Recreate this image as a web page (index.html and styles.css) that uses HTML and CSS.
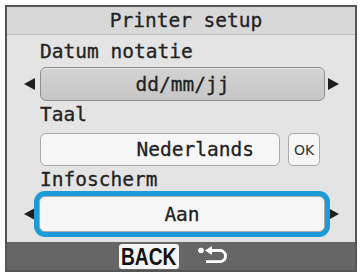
FILE: index.html
```html
<!DOCTYPE html>
<html>
<head>
<meta charset="utf-8">
<link rel="stylesheet" href="styles.css">
</head>
<body>
<div class="screen">
  <div class="title">Printer setup</div>
  <div class="content">
    <div class="label first">Datum notatie</div>
    <div class="row">
      <div class="arrow-cell left"><span class="tri tri-left"></span></div>
      <div class="box gray">dd/mm/jj</div>
      <div class="arrow-cell right"><span class="tri tri-right"></span></div>
    </div>
    <div class="label">Taal</div>
    <div class="row row-lang">
      <div class="box white lang">Nederlands</div>
      <div class="ok">OK</div>
    </div>
    <div class="label">Infoscherm</div>
    <div class="row row-info">
      <div class="arrow-cell left"><span class="tri tri-left"></span></div>
      <div class="box white focus">Aan</div>
      <div class="arrow-cell right"><span class="tri tri-right"></span></div>
    </div>
  </div>
  <div class="bottom">
    <div class="back"><span>BACK</span></div>
    <svg class="ret" width="30" height="20" viewBox="0 0 30 20">
      <circle cx="3" cy="4.5" r="2.8" fill="#fff"/>
      <polygon points="7,4.5 14,0 14,9" fill="#fff"/>
      <path d="M13 4.5 H22 A5.6 5.6 0 0 1 22 15.7 H8" fill="none" stroke="#fff" stroke-width="2.8"/>
    </svg>
  </div>
</div>
</body>
</html>
```
FILE: styles.css
```css
html, body {
  margin: 0;
  padding: 0;
  background: #ffffff;
}
.screen {
  box-sizing: border-box;
  width: 352px;
  height: 267px;
  margin: 5px 0 0 5px;
  border: 2px solid #555;
  background: #e4e4e4;
  display: flex;
  flex-direction: column;
  font-family: "DejaVu Sans Mono", monospace;
  font-size: 19.5px;
  color: #222;
  -webkit-text-stroke: 0.3px #222;
}
.title {
  height: 27px;
  line-height: 27px;
  background: #d8d8d8;
  border-bottom: 1px solid #b9b9b9;
  text-align: center;
  padding-left: 10px;
}
.content {
  display: flex;
  flex-direction: column;
  padding-top: 6px;
}
.label {
  line-height: 22px;
  height: 22px;
  padding-left: 33px;
  margin-top: 3px;
}
.label.first { margin-top: 0; }
.row {
  display: flex;
  align-items: center;
  margin-top: 4px;
}
.row-lang {
  margin-top: 7px;
  padding-left: 33px;
  gap: 8px;
}
.row-info { margin-top: 5px; }
.arrow-cell {
  width: 33px;
  display: flex;
  align-items: center;
}
.arrow-cell.left { justify-content: flex-end; padding-right: 5px; box-sizing: border-box; }
.arrow-cell.right { width: 30px; padding-left: 3px; box-sizing: border-box; }
.tri {
  display: block;
  width: 0;
  height: 0;
  border-top: 6px solid transparent;
  border-bottom: 6px solid transparent;
}
.tri-left { border-right: 11px solid #1e1e1e; }
.tri-right { border-left: 11px solid #1e1e1e; }
.box {
  box-sizing: border-box;
  width: 285px;
  height: 34px;
  border-radius: 6px;
  display: flex;
  align-items: center;
  justify-content: center;
}
.gray {
  background: linear-gradient(#d3d3d3, #c6c6c6);
  border: 1px solid #8e8e8e;
  box-shadow: inset 0 1px 0 #e6e6e6;
}
.white {
  background: #f6f6f6;
  border: 1px solid #a9a9a9;
}
.lang {
  width: 240px;
  height: 33px;
  justify-content: flex-end;
  padding-right: 25px;
}
.ok {
  box-sizing: border-box;
  width: 32px;
  height: 33px;
  background: #f6f6f6;
  border: 1px solid #a9a9a9;
  border-radius: 5px;
  font-family: "DejaVu Sans", sans-serif;
  font-size: 14px;
  color: #333;
  -webkit-text-stroke: 0;
  display: flex;
  align-items: center;
  justify-content: center;
}
.focus {
  width: 287px;
  margin-left: -1px;
  height: 36px;
  position: relative;
  z-index: 1;
  box-shadow: 0 0 0 5px #1b9bd8;
}
.bottom {
  margin-top: auto;
  height: 28px;
  background: #666;
  display: flex;
  align-items: center;
  padding-left: 112px;
  gap: 19px;
}
.back {
  width: 60px;
  height: 25px;
  background: #f3f3f3;
  border-radius: 3px;
  display: flex;
  align-items: center;
  justify-content: center;
  font-family: "Liberation Sans", Arial, sans-serif;
  font-weight: bold;
  font-size: 24px;
  color: #111;
  -webkit-text-stroke: 0;
  overflow: hidden;
}
.back span {
  display: inline-block;
  transform: scaleX(0.8);
  line-height: 25px;
}
.ret { display: block; }
```
